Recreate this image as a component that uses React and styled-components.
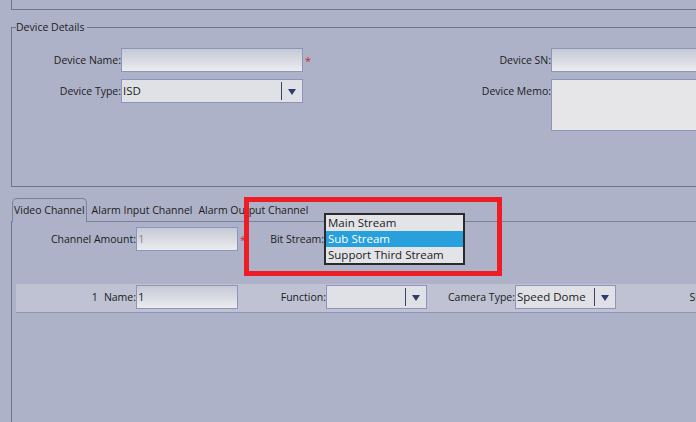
import React from "react";
import styled, { createGlobalStyle } from "styled-components";

const GlobalStyle = createGlobalStyle`
  html, body {
    margin: 0;
    padding: 0;
    background: #adb2c8;
    overflow: hidden;
  }
  body {
    font-family: "Open Sans", "Noto Sans", "DejaVu Sans", sans-serif;
    font-size: 10.5px;
    color: #1c1c1c;
  }
`;

const Page = styled.div`
  position: relative;
  width: 696px;
  height: 422px;
  overflow: hidden;
  padding-left: 11px;
  box-sizing: border-box;
`;

const TopFrame = styled.div`
  height: 9px;
  border-left: 1px solid #6e7591;
  border-bottom: 1px solid #6e7591;
  width: 720px;
`;

const GroupBox = styled.fieldset`
  margin: 10px 0 0 0;
  padding: 14px 0 0 0;
  height: 167px;
  box-sizing: border-box;
  width: 720px;
  border: 1px solid #6e7591;
  border-right: none;
`;

const Legend = styled.legend`
  padding: 0 3px 0 0;
  margin-left: 4px;
  line-height: 14px;
`;

const DetailsGrid = styled.div`
  display: grid;
  grid-template-columns: 109px 182px 10px 238px 200px;
  grid-auto-rows: 24px;
  row-gap: 7px;
  align-items: center;
`;

const Label = styled.div`
  text-align: right;
  white-space: nowrap;
  align-self: ${(p) => (p.$top ? "start" : "center")};
  padding-top: ${(p) => (p.$top ? "5px" : "0")};
`;

const TextBox = styled.div`
  box-sizing: border-box;
  height: ${(p) => p.$h || 24}px;
  width: ${(p) => (p.$w ? `${p.$w}px` : "auto")};
  border: 1px solid #8d96ba;
  background: ${(p) =>
    p.$flat ? "#e6e6e8" : "linear-gradient(#c6c9d5, #ebecef)"};
  color: ${(p) => (p.$disabled ? "#8a8a8a" : "#1c1c1c")};
  padding-left: 1px;
  line-height: 22px;
  font-size: 11.5px;
  white-space: nowrap;
  grid-row: ${(p) => (p.$span ? `span ${p.$span}` : "auto")};
  align-self: start;
  flex-shrink: 0;
`;

const Select = styled.div`
  box-sizing: border-box;
  height: 24px;
  width: ${(p) => p.$w}px;
  border: 1px solid #8d96ba;
  background: #e0e1e6;
  display: flex;
  align-items: stretch;
  font-size: 11.5px;
  flex-shrink: 0;
`;

const SelectValue = styled.div`
  flex: 1;
  padding-left: 1px;
  white-space: nowrap;
  border-right: 1px solid #3b4160;
  margin: 2px 0;
  line-height: 18px;
`;

const Arrow = styled.div`
  width: 20px;
  display: flex;
  align-items: center;
  justify-content: center;
  &::after {
    content: "";
    border-left: 4px solid transparent;
    border-right: 4px solid transparent;
    border-top: 6px solid #2f3c6c;
    margin-top: 1px;
  }
`;

const Star = styled.span`
  color: #d42630;
  font-size: 11px;
  padding-left: 2px;
  line-height: 1;
  align-self: center;
`;

const Tabs = styled.div`
  margin-top: 11px;
`;

const TabBar = styled.div`
  display: flex;
  align-items: flex-end;
  height: 23px;
  border-bottom: 1px solid #7a819d;
  gap: 5px;
`;

const Tab = styled.div`
  box-sizing: border-box;
  height: ${(p) => (p.$active ? "24px" : "22px")};
  padding: 0 1px 0 ${(p) => (p.$active ? "1px" : "0")};
  margin-bottom: ${(p) => (p.$active ? "-1px" : "0")};
  margin-left: ${(p) => (p.$active ? "1px" : "0")};
  border: ${(p) => (p.$active ? "1px solid #7a819d" : "none")};
  border-bottom: none;
  border-radius: 5px 5px 0 0;
  background: #adb2c8;
  line-height: 22px;
  white-space: nowrap;
  font-size: 10.5px;
`;

const Panel = styled.div`
  border-left: 1px solid #6e7591;
  height: 210px;
  padding-top: 5px;
`;

const AmountRow = styled.div`
  display: flex;
  align-items: center;
  height: 24px;
`;

const RowLabel = styled.div`
  width: ${(p) => p.$w}px;
  text-align: right;
  white-space: nowrap;
  flex-shrink: 0;
`;

const ChannelBand = styled.div`
  margin: 33px 0 0 4px;
  height: 29px;
  background: #bec2d2;
  border-bottom: 1px solid #8d95b5;
  display: flex;
  align-items: center;
  padding: 1px 0 3px;
  box-sizing: border-box;
  width: 720px;
`;

const Index = styled.span`
  margin-right: 6px;
`;

const Popup = styled.div`
  position: absolute;
  left: 324px;
  top: 213px;
  width: 141px;
  height: 52px;
  box-sizing: border-box;
  border: 2px solid #2a2a2c;
  background: #e3e4e8;
  font-size: 11.5px;
`;

const Option = styled.div`
  height: 16px;
  line-height: 16px;
  padding-left: 2px;
  background: ${(p) => (p.$selected ? "#27a0dc" : "transparent")};
  color: ${(p) => (p.$selected ? "#ffffff" : "#1c1c1c")};
  white-space: nowrap;
`;

const Highlight = styled.div`
  position: absolute;
  left: 244px;
  top: 197px;
  width: 258px;
  height: 79px;
  box-sizing: border-box;
  border: 5px solid #ee1c25;
  pointer-events: none;
`;

export default function App() {
  return (
    <>
      <GlobalStyle />
      <Page>
        <TopFrame />
        <GroupBox>
          <Legend>Device Details</Legend>
          <DetailsGrid>
            <Label>Device Name:</Label>
            <TextBox />
            <Star>*</Star>
            <Label>Device SN:</Label>
            <TextBox />

            <Label>Device Type:</Label>
            <Select $w={182}>
              <SelectValue>ISD</SelectValue>
              <Arrow />
            </Select>
            <span />
            <Label $top>Device Memo:</Label>
            <TextBox $flat $h={52} $span={2} />
          </DetailsGrid>
        </GroupBox>

        <Tabs>
          <TabBar>
            <Tab $active>Video Channel</Tab>
            <Tab>Alarm Input Channel</Tab>
            <Tab>Alarm Output Channel</Tab>
          </TabBar>
          <Panel>
            <AmountRow>
              <RowLabel $w={124}>Channel Amount:</RowLabel>
              <TextBox $w={102} $disabled>1</TextBox>
              <Star>*</Star>
              <RowLabel $w={78}>Bit Stream:</RowLabel>
            </AmountRow>
            <ChannelBand>
              <RowLabel $w={120}>
                <Index>1</Index>Name:
              </RowLabel>
              <TextBox $w={102}>1</TextBox>
              <RowLabel $w={88}>Function:</RowLabel>
              <Select $w={101}>
                <SelectValue />
                <Arrow />
              </Select>
              <RowLabel $w={88}>Camera Type:</RowLabel>
              <Select $w={101}>
                <SelectValue>Speed Dome</SelectValue>
                <Arrow />
              </Select>
              <RowLabel $w={82}>Sl</RowLabel>
            </ChannelBand>
          </Panel>
        </Tabs>

        <Popup>
          <Option>Main Stream</Option>
          <Option $selected>Sub Stream</Option>
          <Option>Support Third Stream</Option>
        </Popup>
        <Highlight />
      </Page>
    </>
  );
}
